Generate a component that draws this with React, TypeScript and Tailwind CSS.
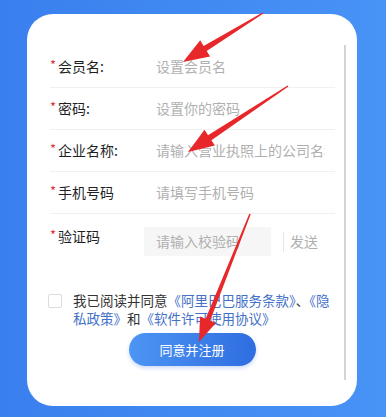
import React from 'react';

type Pt = [number, number];

// tapered red annotation arrow, tail -> tip
function arrowPoints(tail: Pt, tip: Pt, headLen = 26, headW = 19, tailW = 1.5, neckW = 6) {
  const [tx, ty] = tail;
  const [px, py] = tip;
  const len = Math.hypot(px - tx, py - ty);
  const ux = (px - tx) / len;
  const uy = (py - ty) / len;
  const nx = -uy;
  const ny = ux;
  const bx = px - ux * headLen;
  const by = py - uy * headLen;
  const pts: Pt[] = [
    [tx + (nx * tailW) / 2, ty + (ny * tailW) / 2],
    [bx + (nx * neckW) / 2, by + (ny * neckW) / 2],
    [bx + (nx * headW) / 2, by + (ny * headW) / 2],
    [px, py],
    [bx - (nx * headW) / 2, by - (ny * headW) / 2],
    [bx - (nx * neckW) / 2, by - (ny * neckW) / 2],
    [tx - (nx * tailW) / 2, ty - (ny * tailW) / 2],
  ];
  return pts.map((p) => p.map((v) => v.toFixed(1)).join(',')).join(' ');
}

function Row({ label, placeholder }: { label: string; placeholder: string }) {
  return (
    <div className="flex items-center h-[42px] border-b border-[#f0f0f0]">
      <div className="w-[106px] shrink-0 flex items-center">
        <span className="w-2 text-[#d9363e] text-[13px] leading-none -mt-1">*</span>
        <span className="text-[14px] text-[#1f1f1f]">{label}</span>
      </div>
      <div className="flex-1 mr-[10px] overflow-hidden whitespace-nowrap text-[14px] text-[#b0b0b0]">{placeholder}</div>
    </div>
  );
}

export default function App() {
  return (
    <div
      className="relative w-[386px] h-[417px] overflow-hidden bg-gradient-to-r from-[#3a7fee] to-[#4893f6] pt-[14px] pl-[27px]"
      style={{ fontFamily: '"Noto Sans CJK SC", "Noto Sans", sans-serif' }}
    >
      <div className="relative w-[330px] h-[392px] bg-white rounded-[26px] pt-[32px] px-[23px]">
        {/* scroll indicator */}
        <div className="absolute left-[317px] top-[31px] w-[1.5px] h-[335px] bg-[#d4d4d4]" />

        <div className="w-[285px]">
          <Row label="会员名:" placeholder="设置会员名" />
          <Row label="密码:" placeholder="设置你的密码" />
          <Row label="企业名称:" placeholder="请输入营业执照上的公司名称" />
          <Row label="手机号码" placeholder="请填写手机号码" />

          <div className="flex items-start pt-[13px]">
            <div className="w-[94px] shrink-0 flex items-center">
              <span className="w-2 text-[#d9363e] text-[13px] leading-none -mt-1">*</span>
              <span className="text-[14px] text-[#1f1f1f] leading-[18px]">验证码</span>
            </div>
            <div className="w-[127px] h-[29px] bg-[#f6f6f6] flex items-center pl-3 text-[14px] text-[#b0b0b0]">
              请输入校验码
            </div>
            <div className="ml-3 mt-[5px] w-px h-[20px] bg-[#e6e6e6]" />
            <div className="ml-[6px] h-[29px] flex items-center text-[14px] text-[#b0b0b0]">发送</div>
          </div>
        </div>

        <div className="flex items-start mt-[35px] -ml-[2px]">
          <div className="mt-[3px] w-[14px] h-[14px] border border-[#dcdcdc] rounded-[2px] shrink-0" />
          <p className="ml-[11px] w-[266px] text-[13.5px] leading-[18px] text-[#333] whitespace-nowrap">
            我已阅读并同意<span className="text-[#4470c8]">《阿里巴巴服务条款》</span>、<span className="text-[#4470c8]">《隐</span>
            <br />
            <span className="text-[#4470c8]">私政策》</span>和<span className="text-[#4470c8]">《软件许可使用协议》</span>
          </p>
        </div>

        <div className="flex justify-center mt-[6px] -mx-[23px]">
          <button className="w-[127px] h-[33px] rounded-full bg-gradient-to-r from-[#4d95f4] to-[#2f6de0] text-white text-[13px] shadow-[0_2px_4px_rgba(47,109,224,0.25)]">
            同意并注册
          </button>
        </div>
      </div>

      {/* red annotation arrows */}
      <svg className="absolute inset-0 pointer-events-none" width="386" height="417" viewBox="0 0 386 417">
        <polygon points={arrowPoints([263, 13], [183, 62])} fill="#e8272b" />
        <polygon points={arrowPoints([288, 86], [188, 152])} fill="#e8272b" />
        <polygon points={arrowPoints([250, 214], [199, 342], 24, 17, 1.5, 5)} fill="#e8272b" />
      </svg>
    </div>
  );
}
